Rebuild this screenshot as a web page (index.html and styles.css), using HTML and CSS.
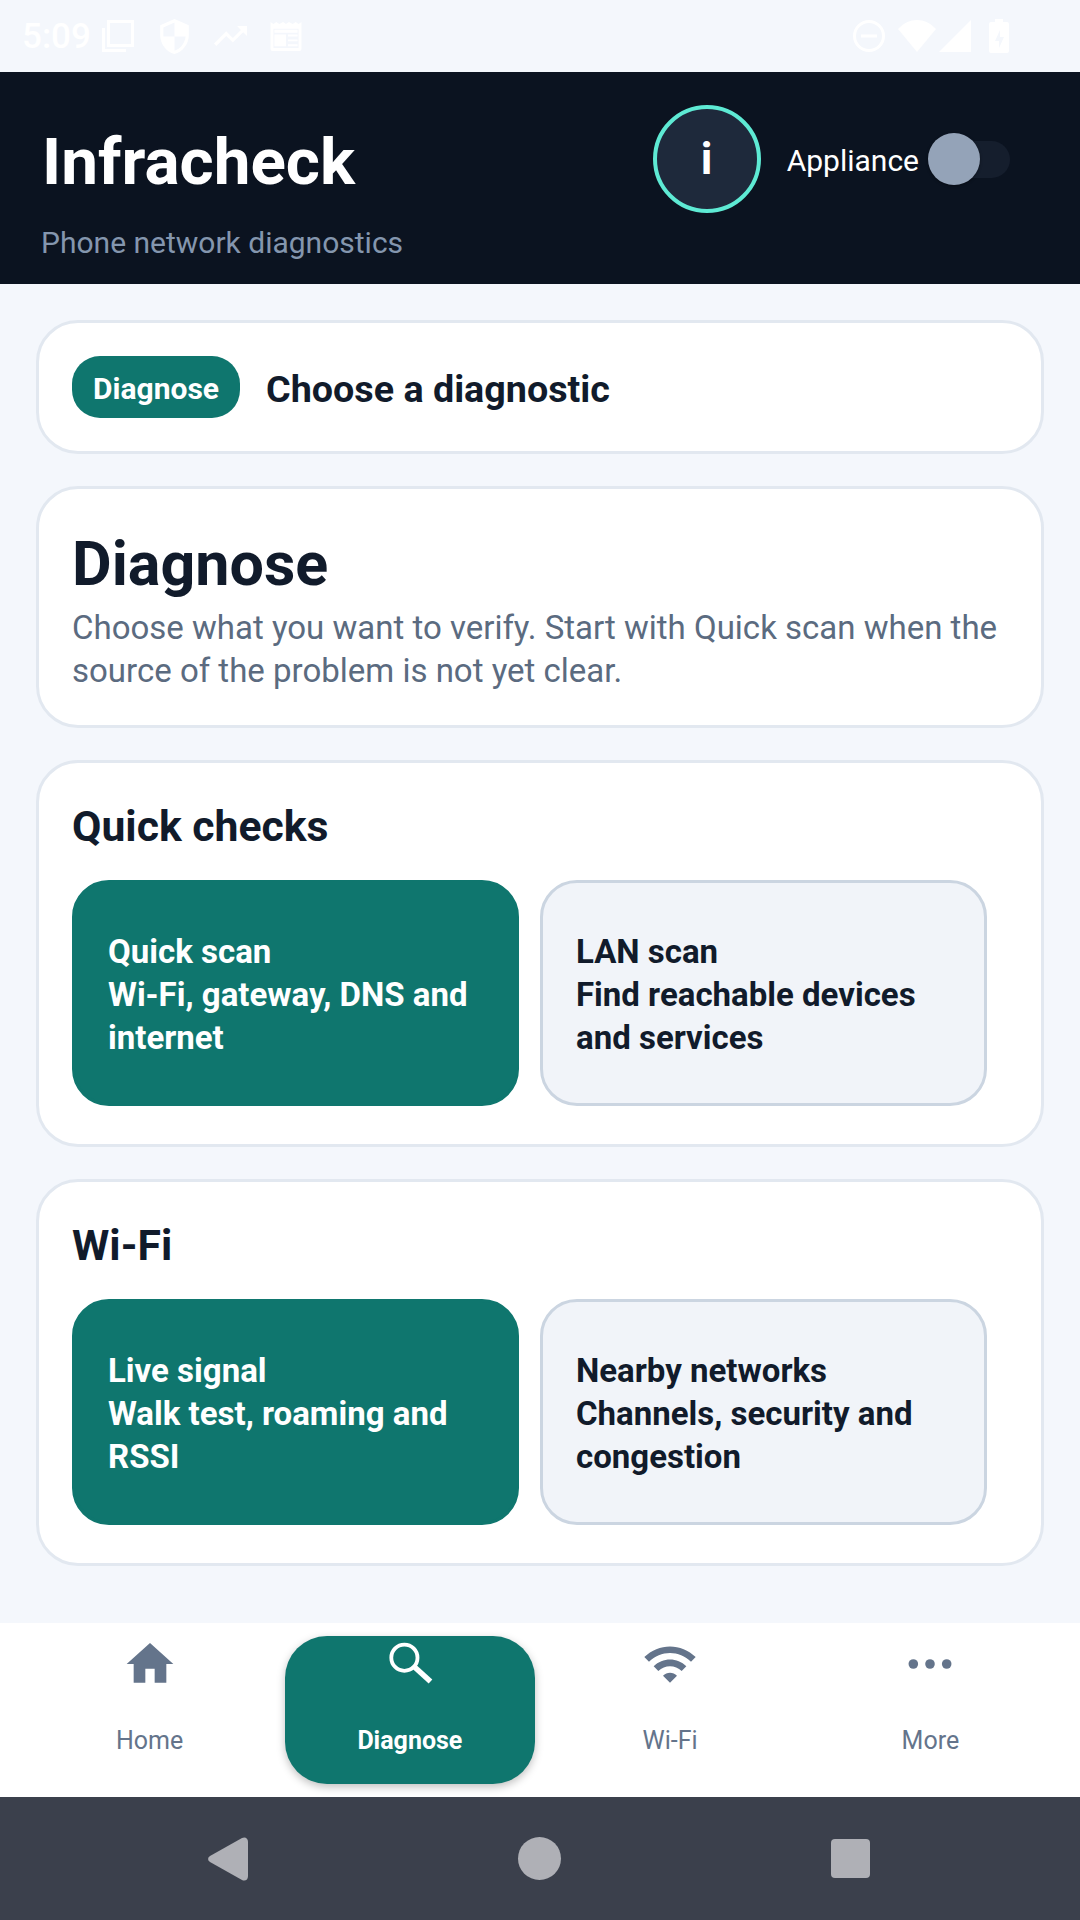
FILE: index.html
```html
<!DOCTYPE html>
<html lang="en">
<head>
    <meta charset="UTF-8">
    <meta name="viewport" content="width=device-width, initial-scale=1.0">
    <title>Infracheck</title>
    <link rel="stylesheet" href="styles.css">
</head>
<body>
    <div class="screen">
        <div class="status-bar">
            <span class="status-time">5:09</span>
            <svg class="st-copy" viewBox="0 0 32 32"><path d="M5 0h27v27H5z M8 3v21h21V3z M0 8h3v21h21v3H0z" fill="#fff" fill-rule="evenodd"/></svg>
            <svg class="st-shield" viewBox="3 1 18 22"><path d="M12 1L3 5v6c0 5.550 3.840 10.740 9 12 5.160-1.260 9-6.450 9-12V5l-9-4zm0 10.990h7c-.53 4.120-3.280 7.790-7 8.940V12H5V6.300l7-3.110v8.800z" fill="#fff"/></svg>
            <svg class="st-trend" viewBox="2 6 20 12"><path d="M16 6l2.290 2.290-4.880 4.880-4-4L2 16.590 3.410 18l6-6 4 4 6.300-6.290L22 12V6z" fill="#fff"/></svg>
            <svg class="st-news" viewBox="0 0 32 30"><path d="M0 0l3 2 3-2 3 2 4-2 3 2 3-2 4 2 3-2 3 2 3-2v28a2 2 0 0 1-2 2H2a2 2 0 0 1-2-2z M3 7v20h26V7z M4 8h24v3H4z M4 13h12v12H4z M18 13h10v2H18z M18 18h10v2H18z M18 23h10v2H18z" fill="#fff" fill-rule="evenodd"/></svg>
            <span class="status-spacer"></span>
            <svg class="st-dnd" viewBox="0 0 32 32"><circle cx="16" cy="16" r="14.500" fill="none" stroke="#fff" stroke-width="3"/><rect x="8" y="14.500" width="16" height="3" fill="#fff"/></svg>
            <svg class="st-wifi" viewBox="0 0 38 32"><path d="M0 9c11-12 27-12 38 0L19 32z" fill="#fff"/></svg>
            <svg class="st-signal" viewBox="0 0 32 32"><path d="M32 0v32H0z" fill="#fff"/></svg>
            <svg class="st-battery" viewBox="0 0 20 34"><path d="M6 0h8v3h4a2 2 0 0 1 2 2v27a2 2 0 0 1-2 2H2a2 2 0 0 1-2-2V5a2 2 0 0 1 2-2h4z M11 11l-5 11h4v7l5-11h-4z" fill="#fff" fill-rule="evenodd"/></svg>
        </div>

        <header class="app-header">
            <div class="header-top">
                <h1 class="brand">Infracheck</h1>
                <div class="header-actions">
                    <div class="info-btn">i</div>
                    <span class="appliance-label">Appliance</span>
                    <div class="switch"><div class="switch-thumb"></div></div>
                </div>
            </div>
            <p class="brand-sub">Phone network diagnostics</p>
        </header>

        <main class="content">
            <section class="card card-crumb">
                <span class="chip">Diagnose</span>
                <span class="crumb-title">Choose a diagnostic</span>
            </section>

            <section class="card">
                <h2 class="page-title">Diagnose</h2>
                <p class="page-desc">Choose what you want to verify. Start with Quick scan when the source of the problem is not yet clear.</p>
            </section>

            <section class="card card-group">
                <h3 class="section-title">Quick checks</h3>
                <div class="tiles">
                    <div class="tile tile-primary">Quick scan<br>Wi-Fi, gateway, DNS and internet</div>
                    <div class="tile">LAN scan<br>Find reachable devices and services</div>
                </div>
            </section>

            <section class="card card-group">
                <h3 class="section-title">Wi-Fi</h3>
                <div class="tiles">
                    <div class="tile tile-primary">Live signal<br>Walk test, roaming and RSSI</div>
                    <div class="tile">Nearby networks<br>Channels, security and congestion</div>
                </div>
            </section>
        </main>

        <nav class="bottom-nav">
            <div class="nav-item">
                <svg class="nav-icon" viewBox="0 0 24 24"><path d="M10 20v-6h4v6h5v-8h3L12 3 2 12h3v8z"/></svg>
                <span>Home</span>
            </div>
            <div class="nav-item active">
                <svg class="nav-icon" viewBox="0 0 56 56"><circle cx="22.400" cy="21.700" r="13.100" fill="none" stroke="#fff" stroke-width="3.800"/><path d="M32.500 31l16 14.500" fill="none" stroke="#fff" stroke-width="5.400"/></svg>
                <span>Diagnose</span>
            </div>
            <div class="nav-item">
                <svg class="nav-icon" viewBox="0 0 24 24"><path d="M1 9l2 2c4.970-4.970 13.030-4.970 18 0l2-2C16.930 2.930 7.080 2.930 1 9zm8 8l3 3 3-3c-1.650-1.660-4.340-1.660-6 0zm-4-4l2 2c2.760-2.760 7.240-2.760 10 0l2-2C15.140 9.140 8.870 9.140 5 13z"/></svg>
                <span>Wi-Fi</span>
            </div>
            <div class="nav-item">
                <svg class="nav-icon" viewBox="0 0 24 24"><circle cx="4.850" cy="12" r="2.050"/><circle cx="12" cy="12" r="2.050"/><circle cx="19.150" cy="12" r="2.050"/></svg>
                <span>More</span>
            </div>
        </nav>

        <div class="system-nav">
            <svg class="sys-back" viewBox="0 0 40 44"><path d="M2 19L34 1c3-1.500 6 0 6 4v34c0 4-3 5.500-6 4L2 25c-2.500-1.500-2.500-4.500 0-6z"/></svg>
            <div class="sys-home"></div>
            <div class="sys-recent"></div>
        </div>
    </div>
</body>
</html>
```

FILE: styles.css
```css
* {
    box-sizing: border-box;
}

body {
    margin: 0;
    background-color: #f4f7fc;
    font-family: 'Roboto', 'Liberation Sans', sans-serif;
    color: #111b2b;
}

.screen {
    width: 1080px;
    height: 1920px;
    display: flex;
    flex-direction: column;
    overflow: hidden;
}

/* status bar */
.status-bar {
    height: 72px;
    padding-left: 22px;
    display: flex;
    align-items: center;
    flex-shrink: 0;
}

.status-time {
    color: #ffffff;
    font-size: 35px;
    font-weight: 500;
    width: 80px;
}

.status-bar svg {
    display: block;
    flex-shrink: 0;
}

.status-spacer {
    flex: 1;
}

.st-copy { width: 32px; height: 32px; }
.st-shield { width: 29px; height: 35px; margin-left: 26px; }
.st-trend { width: 33px; height: 20px; margin-left: 25px; }
.st-news { width: 32px; height: 29px; margin-left: 23px; }
.st-dnd { width: 32px; height: 32px; }
.st-wifi { width: 38px; height: 32px; margin-left: 13px; }
.st-signal { width: 32px; height: 32px; margin-left: 3px; }
.st-battery { width: 20px; height: 34px; margin-left: 18px; margin-right: 71px; }

/* header */
.app-header {
    height: 212px;
    background-color: #0b1320;
    padding: 33px 41px 0;
    flex-shrink: 0;
}

.header-top {
    display: flex;
    align-items: center;
    justify-content: space-between;
}

.brand {
    margin: 5px 0 0 1px;
    color: #ffffff;
    font-size: 65.6px;
    font-weight: 700;
}

.header-actions {
    display: flex;
    align-items: center;
    margin-right: 29px;
}

.info-btn {
    width: 108px;
    height: 108px;
    border-radius: 50%;
    background-color: #1e293b;
    border: 4px solid #5eead4;
    color: #ffffff;
    font-size: 44px;
    font-weight: 700;
    display: flex;
    align-items: center;
    justify-content: center;
    margin-right: 26px;
}

.appliance-label {
    color: #ffffff;
    font-size: 30px;
    margin-top: 2px;
    margin-right: 9px;
}

.switch {
    position: relative;
    width: 82px;
    height: 37px;
    border-radius: 19px;
    background-color: #151e2d;
}

.switch-thumb {
    position: absolute;
    left: 0;
    top: -8px;
    width: 52px;
    height: 52px;
    border-radius: 50%;
    background-color: #94a3b8;
    box-shadow: 0 1px 3px rgba(0, 0, 0, 0.4);
}

.brand-sub {
    margin: 12px 0 0;
    color: #8496ae;
    font-size: 30px;
}

/* content */
.content {
    flex: 1;
    padding: 36px 36px 0;
    display: flex;
    flex-direction: column;
    gap: 32px;
}

.card {
    background-color: #ffffff;
    border: 3px solid #e2e8f0;
    border-radius: 42px;
    padding: 33px;
}

.card-group {
    padding-bottom: 38px;
}

.card-crumb {
    display: flex;
    align-items: center;
    gap: 26px;
}

.chip {
    background-color: #0f766e;
    color: #ffffff;
    font-size: 30px;
    font-weight: 700;
    height: 62px;
    line-height: 66px;
    padding: 0 21px;
    border-radius: 28px;
}

.crumb-title {
    font-size: 37.7px;
    font-weight: 700;
    padding-top: 4px;
}

.page-title {
    margin: 0;
    font-size: 61px;
    line-height: 84px;
    font-weight: 700;
}

.page-desc {
    margin: 0;
    color: #5b6b80;
    font-size: 33px;
    line-height: 43px;
}

.section-title {
    margin: 0 0 24px;
    font-size: 42.7px;
    line-height: 60px;
    font-weight: 700;
}

.tiles {
    display: grid;
    grid-template-columns: 447px 447px;
    gap: 21px;
}

.tile {
    min-height: 226px;
    padding: 2px 33px 0;
    border: 3px solid #cbd5e1;
    border-radius: 37px;
    background-color: #f1f4f9;
    font-size: 33px;
    font-weight: 700;
    line-height: 43px;
    display: flex;
    flex-direction: column;
    justify-content: center;
}

.tile-primary {
    background-color: #0f766e;
    border-color: #0f766e;
    color: #ffffff;
}

/* bottom nav */
.bottom-nav {
    height: 174px;
    background-color: #ffffff;
    flex-shrink: 0;
    padding: 13px 25px;
    display: grid;
    grid-template-columns: repeat(4, 1fr);
    column-gap: 11px;
}

.nav-item {
    height: 148px;
    border-radius: 42px;
    display: flex;
    flex-direction: column;
    align-items: center;
    color: #64748b;
    font-size: 25px;
    gap: 34px;
}

.nav-icon {
    width: 56px;
    height: 56px;
    fill: #64748b;
}

.nav-item.active {
    background-color: #0f766e;
    color: #ffffff;
    font-weight: 700;
    box-shadow: 0 3px 8px rgba(0, 0, 0, 0.25);
}

.nav-item.active .nav-icon {
    fill: #ffffff;
}

/* android nav */
.system-nav {
    height: 123px;
    background-color: #3b404c;
    flex-shrink: 0;
    display: flex;
    align-items: center;
    justify-content: center;
    gap: 270px;
    padding-right: 2px;
}

.sys-back {
    width: 40px;
    height: 44px;
    fill: #afb0b6;
}

.sys-home {
    width: 43px;
    height: 43px;
    border-radius: 50%;
    background-color: #afb0b6;
}

.sys-recent {
    width: 39px;
    height: 39px;
    border-radius: 4px;
    background-color: #afb0b6;
}
```
